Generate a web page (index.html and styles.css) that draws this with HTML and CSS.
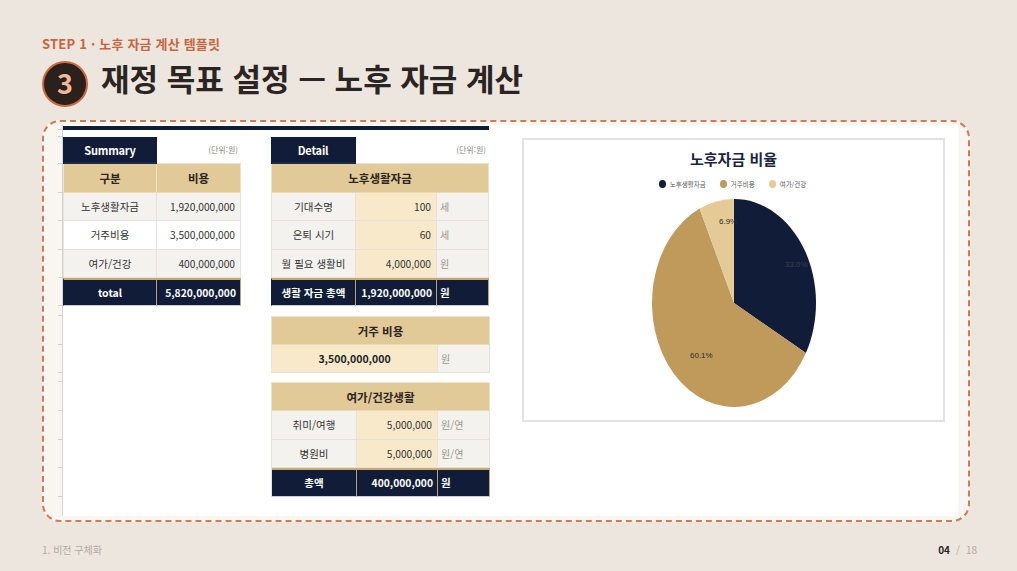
FILE: index.html
```html
<!DOCTYPE html>
<html lang="ko">
<head>
<meta charset="utf-8">
<title>재정 목표 설정 — 노후 자금 계산</title>
<link rel="stylesheet" href="styles.css">
</head>
<body>
<div class="page">
  <div class="step">STEP 1 · 노후 자금 계산 템플릿</div>
  <div class="title-row">
    <div class="num">3</div>
    <h1 class="title">재정 목표 설정 — 노후 자금 계산</h1>
  </div>

  <div class="frame">
    <div class="sheet">
      <div class="gutter">
        <div class="tk h5"></div><div class="tk h7"></div><div class="tk h27"></div><div class="tk h29"></div>
        <div class="tk h28"></div><div class="tk h29"></div><div class="tk h28"></div><div class="tk h28"></div>
        <div class="tk h10"></div><div class="tk h29"></div><div class="tk h28"></div><div class="tk h9"></div>
        <div class="tk h29"></div><div class="tk h29"></div><div class="tk h28"></div><div class="tk h29"></div>
      </div>
      <div class="main">
        <div class="topbar"></div>
        <div class="content">
          <!-- Summary -->
          <div class="tbl summary">
            <div class="c cap">Summary</div>
            <div class="c unitnote">(단위:원)</div>
            <div class="c th">구분</div>
            <div class="c th">비용</div>
            <div class="c lbl alt">노후생활자금</div>
            <div class="c num-r alt">1,920,000,000</div>
            <div class="c lbl">거주비용</div>
            <div class="c num-r">3,500,000,000</div>
            <div class="c lbl alt">여가/건강</div>
            <div class="c num-r alt">400,000,000</div>
            <div class="c tot ctr">total</div>
            <div class="c tot right">5,820,000,000</div>
          </div>

          <!-- Detail -->
          <div class="detail-col">
            <div class="tbl detail d1">
              <div class="c cap">Detail</div>
              <div class="c unitnote span2">(단위:원)</div>
              <div class="c th span3">노후생활자금</div>
              <div class="c lbl alt">기대수명</div>
              <div class="c num-r cream">100</div>
              <div class="c unit alt">세</div>
              <div class="c lbl alt">은퇴 시기</div>
              <div class="c num-r cream">60</div>
              <div class="c unit alt">세</div>
              <div class="c lbl alt">월 필요 생활비</div>
              <div class="c num-r cream">4,000,000</div>
              <div class="c unit alt">원</div>
              <div class="c tot ctr">생활 자금 총액</div>
              <div class="c tot right">1,920,000,000</div>
              <div class="c tot left">원</div>
            </div>

            <div class="tbl detail d2">
              <div class="c th span3">거주 비용</div>
              <div class="c cream bold ctr span2">3,500,000,000</div>
              <div class="c unit alt">원</div>
            </div>

            <div class="tbl detail d3">
              <div class="c th span3">여가/건강생활</div>
              <div class="c lbl alt">취미/여행</div>
              <div class="c num-r cream">5,000,000</div>
              <div class="c unit alt">원/연</div>
              <div class="c lbl alt">병원비</div>
              <div class="c num-r cream">5,000,000</div>
              <div class="c unit alt">원/연</div>
              <div class="c tot ctr">총액</div>
              <div class="c tot right">400,000,000</div>
              <div class="c tot left">원</div>
            </div>
          </div>

          <!-- Chart -->
          <div class="chart">
            <div class="chart-title">노후자금 비율</div>
            <div class="legend">
              <span class="lg"><i class="dot navy"></i>노후생활자금</span>
              <span class="lg"><i class="dot gold"></i>거주비용</span>
              <span class="lg"><i class="dot sand"></i>여가/건강</span>
            </div>
            <svg class="pie" width="164" height="210" viewBox="0 0 164 210">
              <path d="M82,105 L82,1 A82,104 0 0 1 153.86,155.1 Z" fill="#111d38"/>
              <path d="M82,105 L153.86,155.1 A82,104 0 1 1 47.56,10.62 Z" fill="#c09a5b"/>
              <path d="M82,105 L47.56,10.62 A82,104 0 0 1 82,1 Z" fill="#e3ca97"/>
              <text x="133" y="69" class="pl dk">33.0%</text>
              <text x="38" y="160" class="pl">60.1%</text>
              <text x="67" y="26" class="pl">6.9%</text>
            </svg>
          </div>
        </div>
      </div>
    </div>
  </div>

  <div class="footer">
    <span class="crumb">1. 비전 구체화</span>
    <span class="pager"><b>04</b><span class="sep">/</span>18</span>
  </div>
</div>
</body>
</html>
```

FILE: styles.css
```css
* { box-sizing: border-box; }
html, body { margin: 0; padding: 0; }
body {
  background: #ede6df;
  font-family: "Noto Sans CJK KR", "Noto Sans", sans-serif;
  color: #2a2522;
}
.page {
  width: 1017px;
  height: 571px;
  overflow: hidden;
  padding: 36px 0 0 42px;
}
.step {
  font-size: 13px;
  line-height: 16px;
  font-weight: 700;
  color: #c8653a;
  letter-spacing: 0.2px;
}
.title-row {
  display: flex;
  align-items: flex-start;
  margin-top: 9px;
  height: 45px;
}
.num {
  width: 46px;
  height: 46px;
  border-radius: 50%;
  background: #2a201c;
  border: 2px solid #c9693d;
  color: #f3b896;
  font-weight: 700;
  font-size: 27px;
  line-height: 40px;
  text-align: center;
  flex: none;
}
.title {
  margin: -3px 0 0 13px;
  font-size: 31px;
  line-height: 40px;
  font-weight: 700;
  letter-spacing: 0;
  color: #2a2522;
}

.frame {
  margin-top: 14px;
  width: 928px;
  height: 402px;
  border: 2px dashed #d07a56;
  border-radius: 18px;
  background: #f9f6f1;
  padding: 3px 10px 4px 14px;
}
.sheet {
  display: flex;
  height: 391px;
}
.gutter {
  width: 5px;
  border-right: 1px solid #d4d4d4;
  display: flex;
  flex-direction: column;
}
.tk { border-bottom: 1px solid #d0d0d0; flex: none; }
.h5 { height: 5px; } .h7 { height: 7px; } .h9 { height: 9px; } .h10 { height: 10px; }
.h27 { height: 27px; } .h28 { height: 28px; } .h29 { height: 29px; }

.main {
  flex: 1;
  background: #ffffff;
  display: flex;
  flex-direction: column;
}
.topbar {
  width: 426px;
  height: 4px;
  margin-top: 1px;
  background: #111d38;
}
.content {
  display: flex;
  align-items: flex-start;
  margin-top: 7px;
}

.tbl {
  display: grid;
  font-size: 10.5px;
  color: #333;
}
.c {
  display: flex;
  align-items: center;
  justify-content: center;
  border-right: 1px solid #e6e2da;
  border-bottom: 1px solid #e6e2da;
  line-height: 14px;
  white-space: nowrap;
  min-width: 0;
}
.summary {
  width: 178px;
  grid-template-columns: 94px 84px;
  grid-template-rows: 27px 29px 28px 29px 28px 28px;
}
.summary .c:nth-child(odd) { border-left: 1px solid #e6e2da; }
.cap {
  background: #111d38;
  color: #fff;
  font-weight: 700;
  font-size: 11px;
  letter-spacing: -0.2px;
  border-color: #111d38 !important;
  border-bottom: 2px solid #1b2a4a !important;
}
.unitnote {
  background: #fff;
  justify-content: flex-end;
  padding-right: 3px;
  font-size: 8px;
  color: #8a8580;
  border: none !important;
  border-bottom: 1px solid #e6e2da !important;
}
.th {
  background: #e2c998;
  font-weight: 700;
  font-size: 11.5px;
  color: #2b2520;
  border-right-color: #efe2c4;
  border-bottom-color: #e9d9b4;
}
.lbl { background: #fff; }
.alt { background: #f4f2ee; }
.cream { background: #f8e9cb; }
.num-r { justify-content: flex-end; padding-right: 5px; font-size: 10.2px; }
.unit {
  justify-content: flex-start;
  padding-left: 3px;
  color: #9a948d;
  font-size: 10px;
}
.bold { font-weight: 700; color: #222; font-size: 10.5px; }
.ctr { justify-content: center; }
.tot {
  background: #111d38;
  color: #fff;
  font-weight: 700;
  font-size: 10.5px;
  border-top: 2px solid #c9a86b;
  border-right: 1px solid #b9a27a;
  border-bottom: 1px solid #cfcfcf;
}
.summary .tot:nth-child(odd) { border-left: 1px solid #111d38; }
.tot.right { justify-content: flex-end; padding-right: 4px; font-size: 10.3px; }
.tot.left { justify-content: flex-start; padding-left: 3px; }

.span2 { grid-column: span 2; }
.span3 { grid-column: span 3; }

.detail-col {
  margin-left: 30px;
  width: 218px;
  display: flex;
  flex-direction: column;
}
.detail {
  width: 218px;
  grid-template-columns: 85px 81px 52px;
  border-left: 1px solid #e6e2da;
}
.d1 { grid-template-rows: 27px 29px 28px 29px 28px 28px; border-left: none; }
.d1 .c:nth-child(3), .d1 .c:nth-child(4), .d1 .c:nth-child(7), .d1 .c:nth-child(10), .d1 .tot.ctr { border-left: 1px solid #e6e2da; }
.d1 .tot.ctr { border-left-color: #111d38; }
.d2 { grid-template-rows: 29px 28px; margin-top: 10px; }
.d3 { grid-template-rows: 29px 29px 28px 29px; margin-top: 9px; }
.d2 .th, .d3 .th { border-top: 1px solid #ece4d2; }

.chart {
  margin-left: 33px;
  margin-top: 1px;
  width: 423px;
  height: 284px;
  border: 2px solid #e2e2e2;
  background: #fff;
  display: flex;
  flex-direction: column;
  align-items: center;
  padding-top: 8px;
}
.chart-title {
  font-size: 15px;
  line-height: 22px;
  font-weight: 700;
  color: #1c2540;
}
.legend {
  display: flex;
  gap: 14px;
  margin-top: 8px;
  height: 12px;
  align-items: center;
  font-size: 6.5px;
  color: #555;
  margin-left: -2px;
}
.lg { display: flex; align-items: center; }
.dot {
  display: inline-block;
  width: 7px;
  height: 8px;
  border-radius: 50%;
  margin-right: 4px;
}
.dot.navy { background: #111d38; }
.dot.gold { background: #c09a5b; }
.dot.sand { background: #e3ca97; }
.pie { margin-top: 8px; display: block; }
.pl {
  font-family: "Liberation Sans", Arial, sans-serif;
  font-size: 8px;
  fill: #2a2a2a;
}
.pl.dk { fill: #3a3f52; }

.footer {
  display: flex;
  justify-content: space-between;
  align-items: center;
  width: 935px;
  margin-top: 21px;
  font-size: 10px;
  line-height: 14px;
}
.crumb { color: #b3aaa2; }
.pager { color: #b3aaa2; }
.pager b { color: #2a2522; font-weight: 700; }
.sep { margin: 0 6px; }
```
